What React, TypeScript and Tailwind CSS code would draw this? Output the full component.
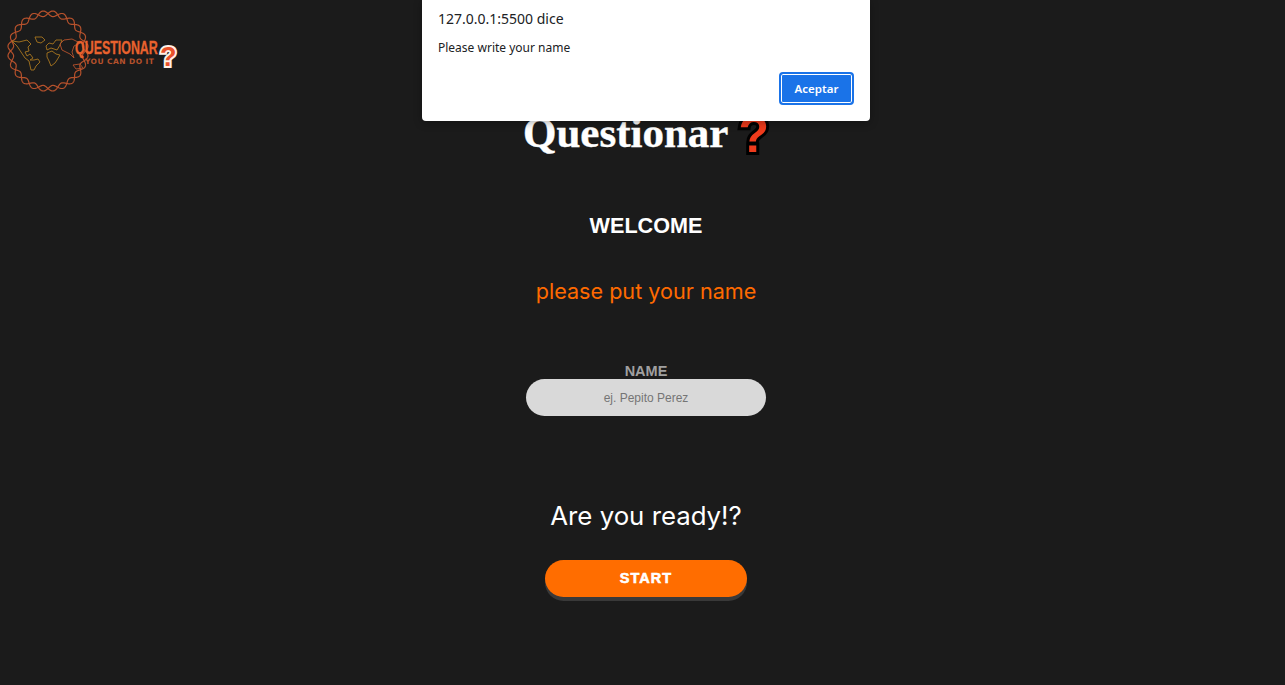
import React from "react";

function ropePath(phase: number) {
  const cx = 48, cy = 51, r = 37.5, amp = 2.8, waves = 12;
  const pts: string[] = [];
  for (let i = 0; i <= 480; i++) {
    const t = (i / 480) * Math.PI * 2;
    const rr = r + amp * Math.sin(t * waves + phase);
    pts.push(`${(cx + rr * Math.cos(t)).toFixed(2)},${(cy + rr * Math.sin(t)).toFixed(2)}`);
  }
  return "M" + pts.join("L") + "Z";
}

function Logo() {
  return (
    <div className="absolute left-0 top-0 w-[190px] h-[100px]">
      <svg width="190" height="100" viewBox="0 0 190 100" fill="none" className="absolute left-0 top-0">
        <path d={ropePath(0)} stroke="#b5512c" strokeWidth="1.2" />
        <path d={ropePath(Math.PI)} stroke="#b5512c" strokeWidth="1.2" />
        <g stroke="#a8761f" strokeWidth="0.9" strokeLinejoin="round">
          <path d="M12 41 L19 42 L27 40 L31 44 L28 47 L29 51 L25 52 L27 56 L30 54 L33 58 L30 60 L34 60 L38 59 L40 62 L36 66 L34 70 L31 70 L29 61 L25 58 L21 52 L17 46 Z" />
          <path d="M35 37 L42 37 L45 40 L41 43 L37 42 Z" />
          <path d="M46 46 L49 43 L53 44 L56 40 L62 40 L60 45 L57 50 L51 48 L47 50 Z" />
          <path d="M47 53 L52 51 L56 54 L60 55 L57 60 L55 63 L51 66 L49 61 L47 57 Z" />
        </g>
        <g stroke="#b5512c" strokeWidth="0.9" strokeLinejoin="round">
          <path d="M60 44 L64 40 L72 39 L80 43 L74 46 L72 52 L74 58 L70 54 L66 52 L62 50 Z" />
          <path d="M73 65 L80 64 L83 68 L76 69 Z" />
        </g>
      </svg>
      <div className="absolute left-[75px] top-[38px] w-[84px] text-[18px] leading-[20px] font-bold text-[#e8622e] whitespace-nowrap origin-left scale-x-[0.69] [-webkit-text-stroke:0.3px_#e8622e] [font-family:'Liberation_Sans',sans-serif]">
        QUESTIONAR
      </div>
      <div className="absolute left-[85px] top-[57px] text-[7.5px] leading-[9px] tracking-[0.45px] font-bold text-[#b5512c] whitespace-nowrap [font-family:'DejaVu_Sans',sans-serif]">
        YOU CAN DO IT
      </div>
      <div className="absolute left-[160px] top-[41px] text-[27px] leading-[32px] font-bold text-[#e8502a] [-webkit-text-stroke:4px_#fff0e6] [paint-order:stroke_fill] [font-family:'Liberation_Sans',sans-serif]">
        ?
      </div>
    </div>
  );
}

function AlertDialog() {
  return (
    <div className="absolute left-[422px] top-0 w-[448px] h-[121px] bg-white rounded-b-[4px] shadow-[0_2px_8px_rgba(0,0,0,0.3)] px-4 pt-[9px] [font-family:'Noto_Sans',sans-serif]">
      <div className="text-[14px] leading-[19px] text-[#202124]">127.0.0.1:5500 dice</div>
      <div className="mt-[11px] text-[12px] leading-[18px] text-[#202124]">Please write your name</div>
      <div className="flex justify-end mt-[15px]">
        <div className="w-[75px] h-[33px] rounded-[4px] border-2 border-[#1a73e8] bg-[#1a73e8] shadow-[inset_0_0_0_1px_#fff] flex items-center justify-center text-[11.5px] font-semibold text-white">
          Aceptar
        </div>
      </div>
    </div>
  );
}

export default function App() {
  return (
    <div className="relative w-full h-[685px] overflow-hidden bg-[#1b1b1b] pl-[7px] flex flex-col items-center [font-family:Inter,sans-serif]">
      <Logo />
      <h1 className="mt-[105px] h-[56px] flex items-center text-[43px] leading-[56px] font-bold text-white [-webkit-text-stroke:0.4px_#fff] [font-family:'Liberation_Serif',serif]">
        Questionar
        <span className="ml-[10px] translate-y-[2px] text-[50px] text-[#ef3b1c] [-webkit-text-stroke:6px_#000] [paint-order:stroke_fill] [font-family:'Liberation_Sans',sans-serif]">?</span>
      </h1>
      <h2 className="mt-[51px] text-[21.6px] leading-[28px] font-bold text-white [font-family:'Liberation_Sans',sans-serif]">WELCOME</h2>
      <p className="mt-[36px] text-[21.6px] leading-[30px] text-[#ff6a00]">please put your name</p>
      <label className="mt-[57px] h-[16px] text-[14.5px] leading-[16px] font-bold text-[#a0a0a0] [font-family:'Liberation_Sans',sans-serif]">NAME</label>
      <div className="w-[240px] h-[37px] rounded-[20px] bg-[#d9d9d9] flex items-center justify-center text-[12px] text-[#757575] [font-family:'Liberation_Sans',sans-serif]">
        ej. Pepito Perez
      </div>
      <p className="mt-[83px] text-[25.8px] leading-[34px] text-white">Are you ready!?</p>
      <div className="mt-[27px] w-[202px] h-[37px] rounded-[20px] bg-[#ff6d00] shadow-[0_4px_0_#393939] flex items-center justify-center pt-[1px] text-[14.5px] font-black tracking-[1px] text-white [-webkit-text-stroke:0.6px_#fff] [font-family:'Liberation_Sans',sans-serif]">
        START
      </div>
      <AlertDialog />
    </div>
  );
}
